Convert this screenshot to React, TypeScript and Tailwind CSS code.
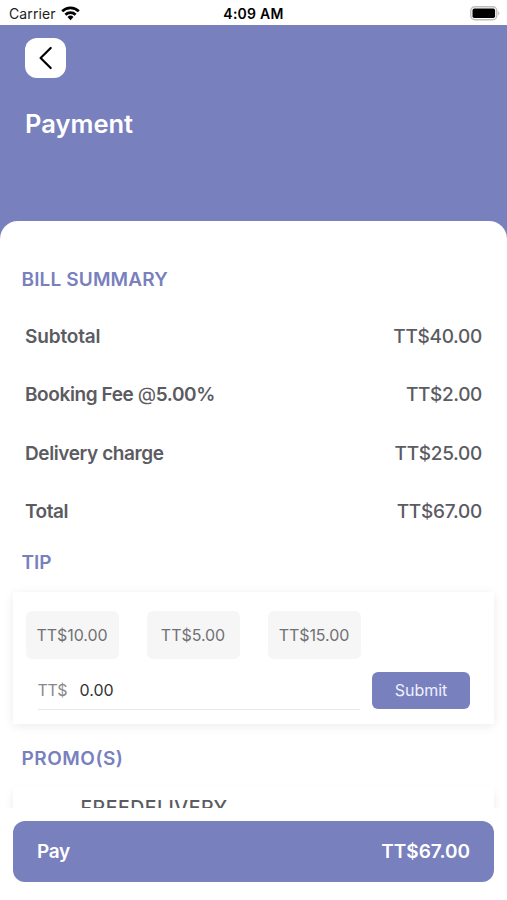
import { useState, type ReactNode } from 'react'

interface BillRow {
  id: string
  label: ReactNode
  amount: string
  labelClass: string
  amountClass: string
}

const bill: BillRow[] = [
  { id: 'subtotal', label: 'Subtotal', amount: 'TT$40.00', labelClass: 'tracking-[-0.15px]', amountClass: 'tracking-[-0.3px]' },
  {
    id: 'fee',
    label: <>Booking Fee <span className="font-normal">@</span>5.00%</>,
    amount: 'TT$2.00',
    labelClass: 'tracking-[-0.4px]',
    amountClass: 'tracking-[-0.35px]',
  },
  { id: 'delivery', label: 'Delivery charge', amount: 'TT$25.00', labelClass: 'tracking-[-0.4px]', amountClass: 'tracking-[-0.3px]' },
  { id: 'total', label: 'Total', amount: 'TT$67.00', labelClass: 'tracking-[-0.45px]', amountClass: 'tracking-[-0.25px]' },
]

const tips = ['10.00', '5.00', '15.00']

function StatusBar() {
  return (
    <div className="relative flex h-[25px] shrink-0 items-center justify-between bg-white pt-0.5 pr-[7px] pl-[9px] text-black">
      <div className="flex items-center gap-[5.5px]">
        <span className="text-[14px] leading-5 tracking-[0.1px] text-[#222]">Carrier</span>
        <svg width="19" height="15" viewBox="0 0 19 15" fill="none" stroke="#000" strokeWidth="2.7">
          <path d="M1.2 5.3a11.8 11.8 0 0 1 16.6 0" />
          <path d="M4.4 8.7a7.3 7.3 0 0 1 10.2 0" />
          <path d="M9.5 14.2 6.5 11a4.3 4.3 0 0 1 6 0z" fill="#000" stroke="none" />
        </svg>
      </div>
      <span className="absolute left-1/2 -translate-x-1/2 text-[14px] leading-5 font-semibold tracking-[0.25px] whitespace-nowrap">4:09 AM</span>
      <svg width="30" height="15" viewBox="0 0 30 15">
        <rect x="0.8" y="0.8" width="26" height="13" rx="4" fill="#fff" stroke="#bdbdbd" strokeWidth="1.4" />
        <rect x="2.5" y="2.6" width="22.6" height="9.4" rx="1.8" fill="#000" />
        <path d="M28.2 5.2c1.7.6 1.7 3.6 0 4.2z" fill="#bdbdbd" />
      </svg>
    </div>
  )
}

export default function App() {
  const [tip, setTip] = useState('0.00')

  return (
    <div className="flex h-[900px] w-[507px] flex-col overflow-hidden bg-white font-['Inter','Liberation_Sans',sans-serif] text-[#5b5b62]">
      <StatusBar />

      <header className="h-[216px] shrink-0 bg-[#7980be] px-[25px] pt-[13px]">
        <button className="flex h-10 w-[41px] items-center justify-center rounded-[12px] bg-white" aria-label="Back">
          <svg width="14" height="24" viewBox="0 0 14 24" fill="none" stroke="#000" strokeWidth="2.2" strokeLinecap="round" strokeLinejoin="round">
            <path d="M11.7 2 1.6 12l10.1 10" />
          </svg>
        </button>
        <h1 className="mt-[30px] text-[25.5px] leading-8 font-semibold text-white">Payment</h1>
      </header>

      <main className="-mt-5 h-[587px] shrink-0 overflow-hidden rounded-t-[18px] bg-white">
        <h2 className="mt-[47px] pl-[21.5px] text-[19px] leading-6 font-semibold tracking-[0.15px] text-[#7980be]">BILL SUMMARY</h2>

        <div className="mt-[15.5px] px-[25px] text-[19px]">
          {bill.map((row) => (
            <div key={row.id} className="flex h-[58.5px] items-center justify-between">
              <span className={`font-semibold ${row.labelClass}`}>{row.label}</span>
              <span className={`font-medium ${row.amountClass}`}>{row.amount}</span>
            </div>
          ))}
        </div>

        <h2 className="mt-[9.5px] pl-[21.5px] text-[19px] leading-6 font-semibold text-[#7980be]">TIP</h2>

        <section className="mx-[13px] mt-[17px] h-[132px] bg-white px-[12.5px] pt-[19px] shadow-[0_2px_10px_rgba(0,0,0,0.08)]">
          <div className="flex gap-7">
            {tips.map((value) => (
              <button
                key={value}
                onClick={() => setTip(value)}
                className="h-12 w-[93px] rounded-md bg-[#f6f6f6] text-[16px] tracking-[-0.05px] text-[#717175]"
              >
                TT${value}
              </button>
            ))}
          </div>
          <div className="mt-[12.5px] flex pl-3">
            <label className="flex h-[38px] w-[322.5px] items-center border-b border-[#e8e8e8] text-[16px]">
              <span className="w-[42px] tracking-[-0.4px] text-[#88888c]">TT$</span>
              <input
                type="text"
                value={tip}
                onChange={(e) => setTip(e.target.value)}
                className="w-40 text-[#333] outline-none"
              />
            </label>
            <button className="ml-3 h-[37px] w-[98px] rounded-md bg-[#7980be] text-[16px] text-[#eef0ff]">Submit</button>
          </div>
        </section>

        <h2 className="mt-[22.5px] pl-[21.5px] text-[19px] leading-6 font-semibold tracking-[0.5px] text-[#7980be]">PROMO(S)</h2>

        <section className="mx-[13px] mt-[15.5px] h-20 bg-white pt-[10px] pl-[67.5px] shadow-[0_6px_9px_rgba(0,0,0,0.08)]">
          <p className="text-[19.5px] leading-6 font-medium tracking-[0.5px]">FREEDELIVERY</p>
        </section>
      </main>

      <footer className="px-[13px] pt-[13px]">
        <button className="flex h-[61px] w-full items-center justify-between rounded-[12px] bg-[#7980be] px-6 pt-0.5 text-[19px] font-semibold text-white">
          <span className="tracking-[-0.3px]">Pay</span>
          <span>TT$67.00</span>
        </button>
      </footer>
    </div>
  )
}
